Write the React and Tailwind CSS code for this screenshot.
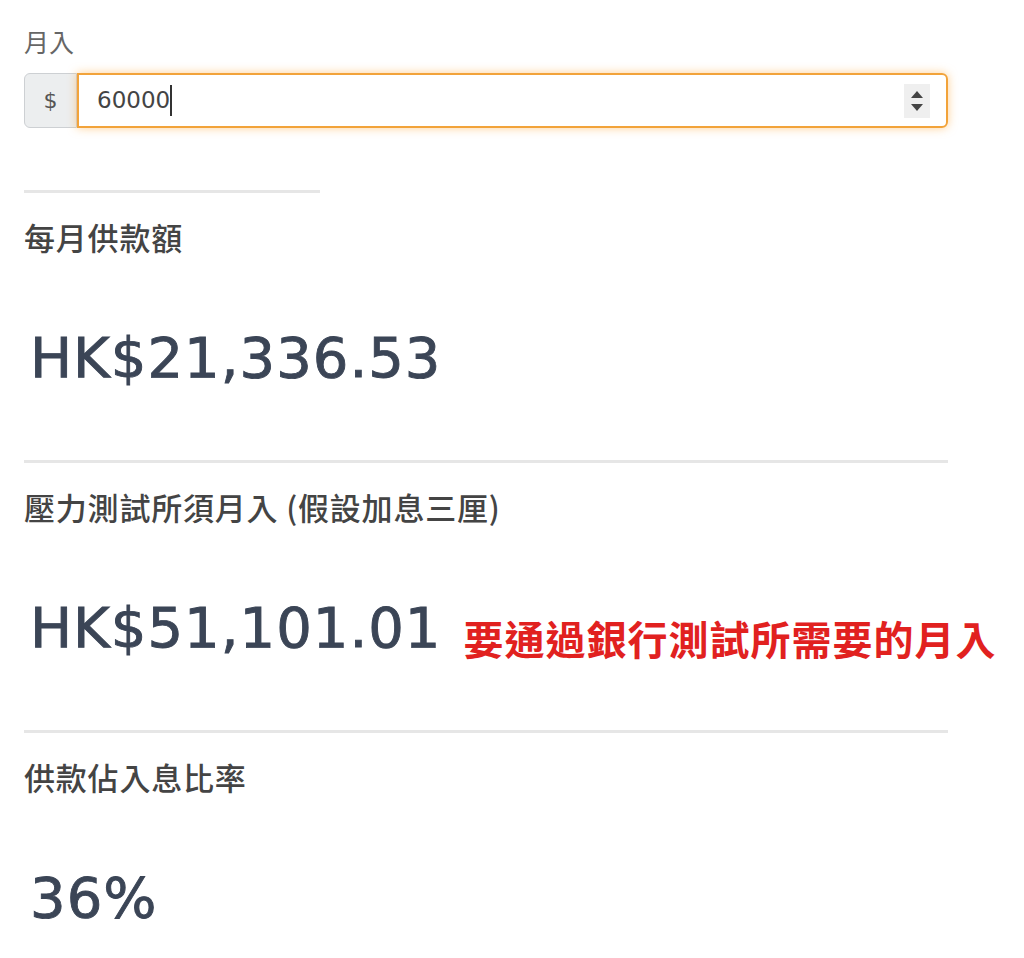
import React from "react";

const num = { fontFamily: '"DejaVu Sans", "Noto Sans CJK TC", sans-serif' };
const cjk = { fontFamily: '"Noto Sans CJK TC", "DejaVu Sans", sans-serif' };

const Result = ({ label, value, note, dividerWidth = "w-full" }) => (
  <div>
    <div className={`${dividerWidth} h-[3px] bg-[#e6e6e6]`} />
    <div className="mt-[28px] text-[31px] leading-none text-[#444] font-medium tracking-[0.8px]" style={cjk}>
      {label}
    </div>
    <div className="mt-[78px] flex items-end h-[56px] whitespace-nowrap">
      <span
        className="text-[56px] leading-none text-[#3b4556] pl-[6px] tracking-[1px] [-webkit-text-stroke:0.9px_#3b4556]"
        style={num}
      >
        {value}
      </span>
      {note && (
        <span
          className="ml-[22px] mb-[-2px] text-[40px] leading-none font-bold text-[#e1211f] tracking-[1px]"
          style={cjk}
        >
          {note}
        </span>
      )}
    </div>
    <div className="h-[74px]" />
  </div>
);

export default function App() {
  return (
    <div className="min-h-[958px] bg-white overflow-hidden">
      <div className="ml-6 w-[924px] pt-[29px]">
        {/* income input */}
        <div className="text-[25px] leading-none text-[#666]" style={cjk}>
          月入
        </div>
        <div className="mt-[19px] flex h-[55px]">
          <div
            className="w-[53px] flex items-center justify-center bg-[#eceeef] border border-[#cdd0d3] rounded-l-md text-[22px] text-[#555]"
            style={num}
          >
            $
          </div>
          <div className="flex-1 flex items-center border-2 border-[#f2a33a] rounded-r-md shadow-[0_0_10px_rgba(255,170,60,0.55)] pl-[18px] pr-[16px]">
            <span className="text-[23px] text-[#444] leading-none" style={num}>
              60000
            </span>
            <span className="w-[2px] h-[31px] bg-[#333]" />
            <div className="ml-auto w-[26px] h-[34px] bg-[#efefef] flex flex-col items-center justify-center gap-[6px]">
              <svg width="12" height="7" viewBox="0 0 12 7">
                <path d="M6 0 L12 7 L0 7 Z" fill="#444" />
              </svg>
              <svg width="12" height="7" viewBox="0 0 12 7">
                <path d="M0 0 L12 0 L6 7 Z" fill="#444" />
              </svg>
            </div>
          </div>
        </div>

        <div className="mt-[62px]">
          <Result label="每月供款額" value="HK$21,336.53" dividerWidth="w-[296px]" />
          <Result
            label="壓力測試所須月入 (假設加息三厘)"
            value="HK$51,101.01"
            note="要通過銀行測試所需要的月入"
          />
          <Result label="供款佔入息比率" value="36%" />
        </div>
      </div>
    </div>
  );
}
